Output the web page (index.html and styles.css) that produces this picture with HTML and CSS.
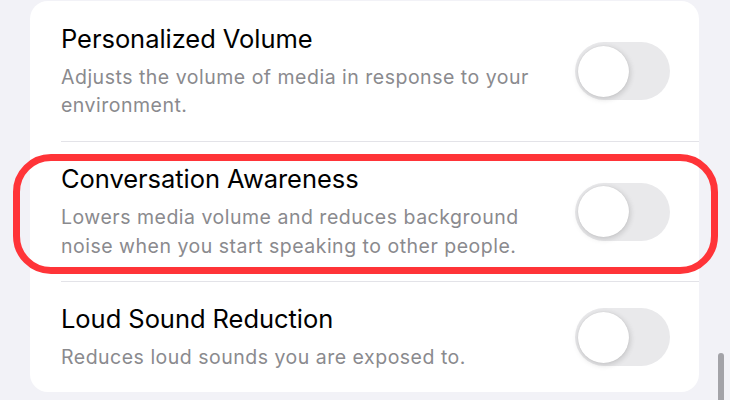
FILE: index.html
```html
<!DOCTYPE html>
<html>
<head>
<meta charset="utf-8">
<link rel="stylesheet" href="styles.css">
</head>
<body>
<div class="page">
  <div class="card">
    <div class="row">
      <div class="text">
        <div class="title">Personalized Volume</div>
        <div class="desc">Adjusts the volume of media in response to your environment.</div>
      </div>
      <div class="toggle"><div class="knob"></div></div>
    </div>
    <div class="divider"></div>
    <div class="row">
      <div class="text">
        <div class="title">Conversation Awareness</div>
        <div class="desc">Lowers media volume and reduces background noise when you start speaking to other people.</div>
      </div>
      <div class="toggle"><div class="knob"></div></div>
    </div>
    <div class="divider"></div>
    <div class="row">
      <div class="text">
        <div class="title">Loud Sound Reduction</div>
        <div class="desc">Reduces loud sounds you are exposed to.</div>
      </div>
      <div class="toggle"><div class="knob"></div></div>
    </div>
  </div>
  <div class="highlight"></div>
  <div class="scrollbar"></div>
</div>
</body>
</html>
```
FILE: styles.css
```css
html, body {
  margin: 0;
  padding: 0;
  background: #f2f2f7;
  width: 730px;
  height: 400px;
  overflow: hidden;
}
.page {
  position: relative;
  width: 730px;
  height: 400px;
  padding-top: 1px;
  box-sizing: border-box;
  font-family: Inter, "Noto Sans", sans-serif;
}
.card {
  margin-left: 30px;
  width: 669px;
  height: 391px;
  background: #ffffff;
  border-radius: 18px;
  padding-left: 31px;
  box-sizing: border-box;
  display: flex;
  flex-direction: column;
}
.row {
  display: flex;
  align-items: center;
  justify-content: space-between;
  padding-right: 29px;
}
.row:nth-child(1) { height: 140px; }
.row:nth-child(3) { height: 139px; }
.row:nth-child(5) { height: 110px; }
.text {
  width: 490px;
  padding-bottom: 0;
}
.title {
  font-size: 25.5px;
  line-height: 32px;
  color: #000000;
  letter-spacing: -0.05px;
}
.desc {
  margin-top: 8px;
  font-size: 19.5px;
  line-height: 28.5px;
  color: #8a8a8e;
  letter-spacing: 0.5px;
}
.divider {
  height: 1px;
  background: #e3e3e8;
}
.toggle {
  width: 95px;
  height: 58px;
  border-radius: 29px;
  background: #e9e9eb;
  display: flex;
  align-items: center;
  padding-left: 3px;
  box-sizing: border-box;
  flex-shrink: 0;
}
.knob {
  width: 51px;
  height: 51px;
  border-radius: 50%;
  background: #ffffff;
  box-shadow: 0 2px 6px rgba(0,0,0,0.12), 0 0 1px rgba(0,0,0,0.12), 2px 1px 6px rgba(0,0,0,0.06);
}
.highlight {
  position: absolute;
  left: 13px;
  top: 154px;
  width: 705px;
  height: 120px;
  box-sizing: border-box;
  border: 7px solid #ff3438;
  border-radius: 38px;
}
.scrollbar {
  position: absolute;
  left: 718px;
  top: 353px;
  width: 6px;
  height: 60px;
  border-radius: 3px;
  background: #a3a3a8;
}
```
